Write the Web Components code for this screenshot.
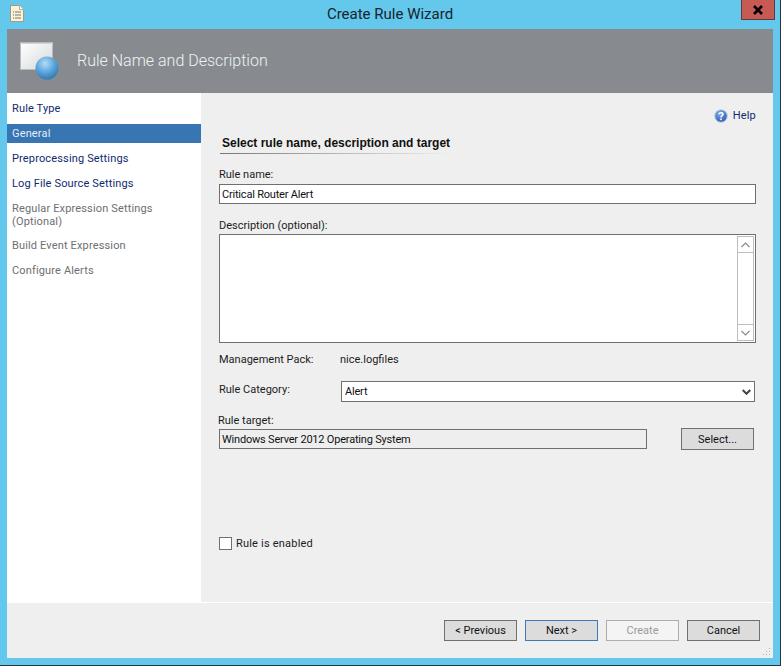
<!DOCTYPE html>
<html>
<head>
<meta charset="utf-8">
<title>Create Rule Wizard</title>
<style>
  html, body { margin: 0; padding: 0; background: #fff; }
  body { font: 11px/16px Roboto, "Liberation Sans", sans-serif; color: #1c1c1c; }
</style>
</head>
<body>
<wizard-window>
  <wizard-titlebar slot="titlebar">Create Rule Wizard</wizard-titlebar>
  <wizard-header slot="header">Rule Name and Description</wizard-header>
  <wizard-steps slot="steps">
    <wizard-step>Rule Type</wizard-step>
    <wizard-step selected>General</wizard-step>
    <wizard-step>Preprocessing Settings</wizard-step>
    <wizard-step>Log File Source Settings</wizard-step>
    <wizard-step disabled wrapped>Regular Expression Settings (Optional)</wizard-step>
    <wizard-step disabled>Build Event Expression</wizard-step>
    <wizard-step disabled>Configure Alerts</wizard-step>
  </wizard-steps>
  <rule-form slot="content"></rule-form>
  <wizard-button slot="footer">&lt; Previous</wizard-button>
  <wizard-button slot="footer" focused>Next &gt;</wizard-button>
  <wizard-button slot="footer" disabled>Create</wizard-button>
  <wizard-button slot="footer">Cancel</wizard-button>
</wizard-window>

<script>
class WizardWindow extends HTMLElement {
  constructor() {
    super();
    this.attachShadow({ mode: "open" }).innerHTML = `
      <style>
        :host {
          display: flex;
          flex-direction: column;
          box-sizing: border-box;
          width: 781px;
          height: 666px;
          background: #63c8ec;
          border-right: 1px solid #2b3238;
          border-bottom: 1px solid #2b3238;
        }
        .client {
          flex: 1;
          display: flex;
          flex-direction: column;
          margin: 0 7px 7px;
          background: #efefef;
          min-height: 0;
        }
        .body { height: 510px; display: flex; }
        .steps { width: 194px; background: #fff; flex: none; }
        .content { flex: 1; box-shadow: inset 0 -1px 0 #fff; }
        .footer {
          position: relative;
          flex: 1;
          display: flex;
          justify-content: flex-end;
          gap: 8px;
          padding: 17px 13px 0 0;
        }
        .grip { position: absolute; right: 2px; bottom: 2px; }
      </style>
      <slot name="titlebar"></slot>
      <div class="client">
        <slot name="header"></slot>
        <div class="body">
          <div class="steps"><slot name="steps"></slot></div>
          <div class="content"><slot name="content"></slot></div>
        </div>
        <div class="footer">
          <slot name="footer"></slot>
          <svg class="grip" width="8" height="8" viewBox="0 0 8 8" fill="#b4b4b4">
            <rect x="6" y="0" width="1" height="1"/><rect x="3" y="3" width="1" height="1"/>
            <rect x="6" y="3" width="1" height="1"/><rect x="0" y="6" width="1" height="1"/>
            <rect x="3" y="6" width="1" height="1"/><rect x="6" y="6" width="1" height="1"/>
          </svg>
        </div>
      </div>`;
  }
}
customElements.define("wizard-window", WizardWindow);

class WizardTitlebar extends HTMLElement {
  constructor() {
    super();
    this.attachShadow({ mode: "open" }).innerHTML = `
      <style>
        :host {
          display: grid;
          grid-template-columns: 1fr auto 1fr;
          height: 29px;
          flex: none;
          font-size: 15px;
          color: #17242c;
        }
        .icon { margin: 5px 0 0 10px; }
        .title { line-height: 28px; }
        .close {
          justify-self: end;
          box-sizing: border-box;
          width: 34px;
          height: 20px;
          margin-right: 5px;
          background: #c75a52;
          border: 1px solid #5e3a3c;
          border-top: 0;
          display: flex;
          align-items: center;
          justify-content: center;
        }
      </style>
      <div>
        <svg class="icon" width="14" height="17" viewBox="0 0 14 17">
          <path d="M.5.5H9.5L13.5 4.5V16.5H.5Z" fill="#fbf3d8" stroke="#a39a86"/>
          <path d="M9.5.5V4.5H13.5" fill="#fff" stroke="#b5ad9a"/>
          <path d="M3 7h1M3 10h1M3 13h1" stroke="#5d5d55"/>
          <path d="M5 7h6M5 10h6M5 13h6" stroke="#77766c"/>
        </svg>
      </div>
      <div class="title"><slot></slot></div>
      <div class="close">
        <svg width="12" height="10" viewBox="0 0 12 10"><path d="M2 1 10 9M10 1 2 9" stroke="#000" stroke-width="2.6"/></svg>
      </div>`;
  }
}
customElements.define("wizard-titlebar", WizardTitlebar);

class WizardHeader extends HTMLElement {
  constructor() {
    super();
    this.attachShadow({ mode: "open" }).innerHTML = `
      <style>
        :host {
          display: flex;
          align-items: center;
          flex: none;
          height: 64px;
          background: #878b8f;
          color: #eef3f6;
          font-size: 16px;
          font-weight: 300;
        }
        svg { margin-left: 12px; flex: none; }
        .text { margin-left: 18px; margin-top: -1px; }
      </style>
      <svg width="40" height="40" viewBox="0 0 40 40">
        <defs>
          <linearGradient id="pane" x1="0" y1="0" x2="1" y2="1">
            <stop offset="0" stop-color="#ffffff"/><stop offset="1" stop-color="#d5d7da"/>
          </linearGradient>
          <radialGradient id="ball" cx=".42" cy=".3" r=".8">
            <stop offset="0" stop-color="#b5dcf4"/><stop offset=".5" stop-color="#5aa5dc"/><stop offset="1" stop-color="#246ca8"/>
          </radialGradient>
        </defs>
        <rect x="1.5" y="2.5" width="32" height="26" fill="url(#pane)" stroke="#b9bcbf"/>
        <path d="M1 2h33" stroke="#e8e9ea"/>
        <circle cx="28" cy="27" r="11.5" fill="url(#ball)"/>
      </svg>
      <div class="text"><slot></slot></div>`;
  }
}
customElements.define("wizard-header", WizardHeader);

class WizardSteps extends HTMLElement {
  constructor() {
    super();
    this.attachShadow({ mode: "open" }).innerHTML = `
      <style>
        :host { display: flex; flex-direction: column; gap: 6px; padding-top: 6px; }
      </style>
      <slot></slot>`;
  }
}
customElements.define("wizard-steps", WizardSteps);

class WizardStep extends HTMLElement {
  constructor() {
    super();
    this.attachShadow({ mode: "open" }).innerHTML = `
      <style>
        :host {
          display: block;
          padding: 3px 30px 3px 5px;
          line-height: 13px;
          letter-spacing: .15px;
          color: #0f2a70;
        }
        :host([selected]) { background: #3775b3; color: #e6edf5; }
        :host([disabled]) { color: #6e6e72; }
        :host([wrapped]) { padding-bottom: 2px; }
      </style>
      <slot></slot>`;
  }
}
customElements.define("wizard-step", WizardStep);

class TextBox extends HTMLElement {
  constructor() {
    super();
    this.attachShadow({ mode: "open" }).innerHTML = `
      <style>
        :host {
          display: block;
          box-sizing: border-box;
          height: 20px;
          padding-left: 2px;
          line-height: 20px;
          letter-spacing: -.2px;
          background: #fff;
          border: 1px solid #6f6f6f;
          color: #111;
        }
        :host([readonly]) { background: #eeeeee; }
      </style>
      <slot></slot>`;
  }
}
customElements.define("text-box", TextBox);

class WizardButton extends HTMLElement {
  constructor() {
    super();
    this.attachShadow({ mode: "open" }).innerHTML = `
      <style>
        :host {
          display: block;
          box-sizing: border-box;
          width: 73px;
          height: 21px;
          line-height: 20px;
          text-align: center;
          background: #dcdcdc;
          border: 1px solid #707070;
          color: #111;
        }
        :host([focused]) { border-color: #3a7cb6; }
        :host([disabled]) { background: #f4f4f4; border-color: #adadad; color: #9a9a9a; }
      </style>
      <slot></slot>`;
  }
}
customElements.define("wizard-button", WizardButton);

class RuleForm extends HTMLElement {
  constructor() {
    super();
    this.attachShadow({ mode: "open" }).innerHTML = `
      <style>
        :host {
          display: block;
          padding: 14px 17px 0 18px;
          line-height: 18px;
          color: #1c1c1c;
        }
        .help {
          display: flex;
          justify-content: flex-end;
          align-items: flex-start;
          gap: 5px;
          height: 16px;
          color: #0f2a70;
          letter-spacing: .2px;
        }
        .help svg { margin-top: 2px; }
        h2 {
          margin: 12px 0 0 1px;
          padding: 0 0 2px 2px;
          width: 229px;
          font: bold 12px/16px "Liberation Sans", sans-serif;
          color: #111;
          border-bottom: 1px solid;
          border-image: linear-gradient(90deg, #777 0, #bbb 55%, #efefef 100%) 1;
        }
        .label { height: 16px; }
        .mt2 { margin-top: 12px; }
        .field { margin-top: 2px; }
        .desc-label { margin-top: 13px; }
        .textarea {
          position: relative;
          box-sizing: border-box;
          height: 109px;
          margin-top: 1px;
          background: #fff;
          border: 1px solid #6f6f6f;
        }
        .scroll {
          position: absolute;
          top: 1px;
          right: 1px;
          bottom: 1px;
          width: 17px;
          box-sizing: border-box;
          display: flex;
          flex-direction: column;
          justify-content: space-between;
          border: 1px solid #bdbdbd;
          background: #fff;
        }
        .scroll div { height: 15px; display: flex; align-items: center; justify-content: center; }
        .scroll div:first-child { border-bottom: 1px solid #bdbdbd; }
        .scroll div:last-child { border-top: 1px solid #bdbdbd; }
        .row { display: flex; }
        .row .key { width: 121px; flex: none; }
        .pack { margin-top: 8px; height: 16px; }
        .category { margin-top: 14px; margin-right: 1px; height: 21px; }
        .select {
          flex: 1;
          box-sizing: border-box;
          height: 21px;
          margin-left: 1px;
          padding-left: 3px;
          line-height: 20px;
          letter-spacing: -.2px;
          background: #fff;
          border: 1px solid #6f6f6f;
          color: #111;
          display: flex;
          justify-content: space-between;
          align-items: flex-start;
        }
        .select svg { align-self: center; margin-right: 3px; }
        .target-label { margin-top: 10px; margin-left: -1px; }
        .target { align-items: center; gap: 34px; height: 22px; margin-right: 2px; }
        .target text-box { flex: 1; }
        .target wizard-button { height: 22px; line-height: 21px; flex: none; }
        .enabled { display: flex; align-items: flex-start; gap: 4px; margin-top: 85px; height: 16px; letter-spacing: .2px; }
        .box { box-sizing: border-box; width: 13px; height: 13px; margin-top: 2px; background: #fff; border: 1px solid #707070; }
      </style>
      <div class="help">
        <svg width="14" height="14" viewBox="0 0 14 14">
          <defs>
            <radialGradient id="q" cx=".4" cy=".3" r=".8">
              <stop offset="0" stop-color="#7fb0ee"/><stop offset="1" stop-color="#1d4fb0"/>
            </radialGradient>
          </defs>
          <circle cx="7" cy="7" r="6.3" fill="url(#q)" stroke="#c9d3dc"/>
          <path d="M5 5.2C5 3.4 9 3.4 9 5.3 9 6.7 7 6.7 7 8.4" fill="none" stroke="#fff" stroke-width="1.5"/>
          <rect x="6.2" y="9.5" width="1.6" height="1.6" fill="#fff"/>
        </svg>
        <span>Help</span>
      </div>
      <h2>Select rule name, description and target</h2>
      <div class="label mt2">Rule name:</div>
      <text-box class="field">Critical Router Alert</text-box>
      <div class="label desc-label">Description (optional):</div>
      <div class="textarea">
        <div class="scroll">
          <div><svg width="9" height="6" viewBox="0 0 9 6"><path d="M.5 5 4.5 1 8.5 5" fill="none" stroke="#8a8a8a" stroke-width="1.2"/></svg></div>
          <div><svg width="9" height="6" viewBox="0 0 9 6"><path d="M.5 1 4.5 5 8.5 1" fill="none" stroke="#8a8a8a" stroke-width="1.2"/></svg></div>
        </div>
      </div>
      <div class="row pack"><div class="key">Management Pack:</div><div>nice.logfiles</div></div>
      <div class="row category">
        <div class="key">Rule Category:</div>
        <div class="select"><span>Alert</span>
          <svg width="9" height="6" viewBox="0 0 9 6"><path d="M.7 1 4.5 4.8 8.3 1" fill="none" stroke="#444" stroke-width="2"/></svg>
        </div>
      </div>
      <div class="label target-label">Rule target:</div>
      <div class="row target">
        <text-box readonly>Windows Server 2012 Operating System</text-box>
        <wizard-button>Select...</wizard-button>
      </div>
      <div class="enabled"><span class="box"></span><span>Rule is enabled</span></div>`;
  }
}
customElements.define("rule-form", RuleForm);
</script>
</body>
</html>
